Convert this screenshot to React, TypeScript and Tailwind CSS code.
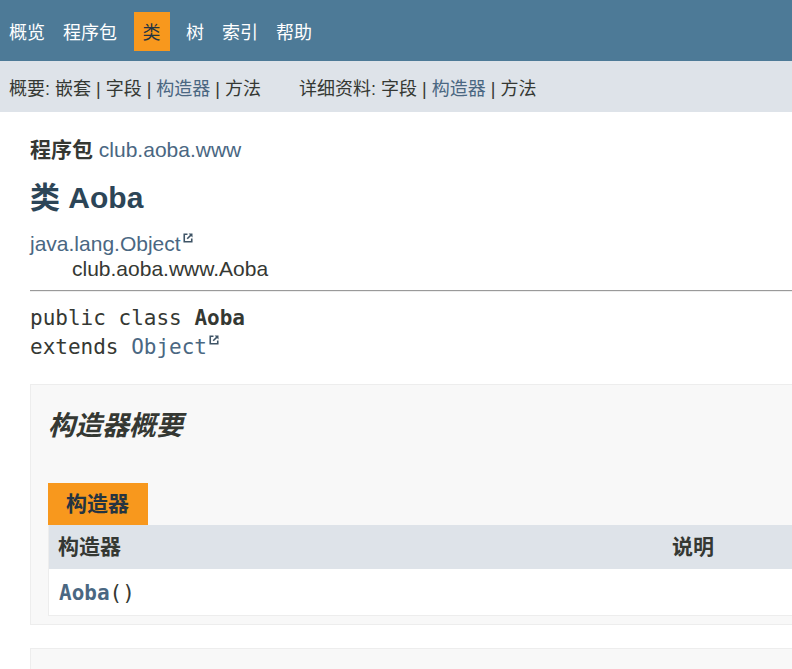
const sans = "font-['Liberation_Sans','Noto_Sans_CJK_SC',sans-serif]";
const mono = "font-['DejaVu_Sans_Mono','Noto_Sans_CJK_SC',monospace]";

const ExtIcon = () => (
  <svg width="10" height="10" viewBox="0 0 10 10" className="inline-block align-top ml-[2px] mt-[2px] text-[#3f5466]">
    <path d="M4.5 1.25H1.25V8.75H8.75V5.5" fill="none" stroke="currentColor" strokeWidth="1.6" />
    <path d="M4.2 5.8L8.4 1.6" stroke="currentColor" strokeWidth="1.6" />
    <path d="M5.6 0.5H9.5V4.4Z" fill="currentColor" />
  </svg>
);

const navItems = ["概览", "程序包", "类", "树", "索引", "帮助"];

export default function App() {
  return (
    <div className={`${sans} w-full min-h-[669px] overflow-hidden bg-white text-[#353833]`}>
      {/* top nav */}
      <div className="h-[61px] bg-[#4D7A97] pt-[12px]">
        <ul className="flex items-center text-[18px] text-white">
          {navItems.map((item) =>
            item === "类" ? (
              <li key={item} className="mx-[7.5px] h-[39px] px-[9px] pt-[3px] flex items-center bg-[#F8981D] text-[#253441]">
                {item}
              </li>
            ) : (
              <li key={item} className="h-[39px] px-[9px] pt-[3px] flex items-center">
                {item}
              </li>
            )
          )}
        </ul>
      </div>

      {/* sub nav */}
      <div className="h-[51px] bg-[#dee3e9] flex items-center pl-[9px] pt-[5px] text-[18px] whitespace-pre">
        <div>
          概要: 嵌套 | 字段 | <span className="text-[#4A6782]">构造器</span> | 方法
        </div>
        <div className="ml-[38px]">
          详细资料: 字段 | <span className="text-[#4A6782]">构造器</span> | 方法
        </div>
      </div>

      <main className="pl-[30px]">
        <div className="mt-[23px] text-[21px] leading-[30px]">
          <span className="font-bold">程序包</span>{" "}
          <span className="text-[#4A6782]">club.aoba.www</span>
        </div>
        <h1 className="mt-[15px] text-[30px] leading-[36px] font-bold text-[#2c4557]">类 Aoba</h1>

        <div className="mt-[15px] text-[21px] leading-[25px]">
          <div className="text-[#4A6782]">
            java.lang.Object
            <ExtIcon />
          </div>
          <div className="pl-[42px]">club.aoba.www.Aoba</div>
        </div>

        <hr className="mt-[9px] border-0 border-t border-t-[#9a9a9a] border-b border-b-[#eeeeee]" />

        <div className={`${mono} mt-[12px] text-[21px] leading-[29px]`}>
          <div>
            public class <span className="font-bold">Aoba</span>
          </div>
          <div>
            extends <span className="text-[#4A6782]">Object</span>
            <ExtIcon />
          </div>
        </div>

        {/* constructor summary */}
        <section className="mt-[22px] -mr-[40px] border border-[#ededed] bg-[#f8f8f8] pl-[17px] pb-[8px]">
          <h2 className="mt-[24px] text-[27px] leading-[34px] font-bold italic text-[#353833]">构造器概要</h2>
          <div className="mt-[40px] flex">
            <div className="h-[42px] pl-[18px] pr-[19px] flex items-center bg-[#F8981D] text-[21px] font-bold text-[#253441]">
              构造器
            </div>
          </div>
          <div className="border-l border-b border-[#ededed] bg-white">
            <div className="grid grid-cols-[614px_1fr] h-[44px] bg-[#dee3e9] text-[21px] font-bold items-center">
              <div className="pl-[9px]">构造器</div>
              <div className="pl-[9px]">说明</div>
            </div>
            <div className="grid grid-cols-[614px_1fr] h-[46px] pt-[4px] items-center">
              <div className={`${mono} pl-[10px] text-[21px]`}>
                <span className="font-bold text-[#4A6782]">Aoba</span>()
              </div>
              <div />
            </div>
          </div>
        </section>

        <section className="mt-[23px] -mr-[40px] h-[60px] border border-[#ededed] bg-[#f8f8f8]" />
      </main>
    </div>
  );
}
